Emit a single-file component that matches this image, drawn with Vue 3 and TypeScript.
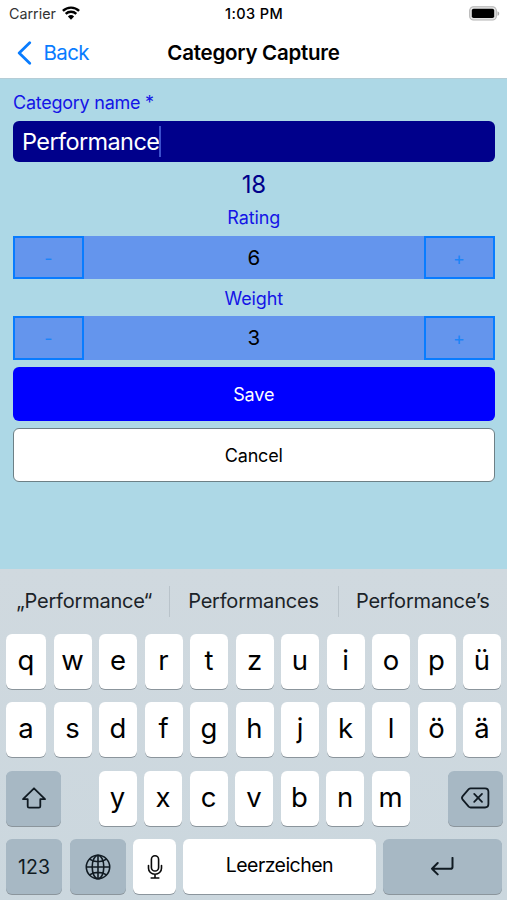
<script setup lang="ts">
import { computed, ref } from 'vue'

const name = ref('Performance')
const rating = ref(6)
const weight = ref(3)
const score = computed(() => rating.value * weight.value)

const suggestions = ['„Performance“', 'Performances', 'Performance’s']
const letterRows = [Array.from('qwertzuiopü'), Array.from('asdfghjklöä')]
const bottomLetters = Array.from('yxcvbnm')

function step(target: 'rating' | 'weight', delta: number) {
  const field = target === 'rating' ? rating : weight
  field.value = Math.max(0, field.value + delta)
}
</script>

<template>
  <main class="phone">
    <div class="status">
      <span class="carrier">Carrier</span>
      <svg class="wifi" viewBox="0 0 18 14" width="18" height="14">
        <path d="M.9 4.900a11.600 11.600 0 0 1 16.200 0M3.700 7.900a7.600 7.600 0 0 1 10.600 0" fill="none" stroke="#000" stroke-width="2.400" />
        <path d="M9 13.700 5.900 10.400a4.500 4.500 0 0 1 6.200 0z" fill="#000" />
      </svg>
      <span class="time">1:03 PM</span>
      <svg class="battery" viewBox="0 0 31 15" width="31" height="15">
        <rect x=".7" y=".8" width="26.6" height="13.2" rx="3.8" fill="#e4e4e4" stroke="#b4b4b4" stroke-width="1.1" />
        <rect x="2.8" y="2.8" width="22.4" height="9.2" rx="1.8" fill="#000" />
        <path d="M28.5 5.2c2.3.8 2.3 3.8 0 4.6z" fill="#aaa" />
      </svg>
    </div>

    <header class="nav">
      <button class="back">
        <svg viewBox="0 0 15 24" width="15" height="24">
          <path d="M12.7 1.800 2.200 12l10.500 10.200" fill="none" stroke="#087cff" stroke-width="2.8" stroke-linecap="round" stroke-linejoin="round" />
        </svg>
        <span>Back</span>
      </button>
      <h1>Category Capture</h1>
    </header>

    <section class="form">
      <div class="label name-label"><span>Category name *</span></div>
      <div class="input"><span class="value">{{ name }}</span><i class="caret"></i></div>
      <div class="score">{{ score }}</div>
      <div class="label rating-label"><span>Rating</span></div>
      <div class="stepper">
        <button @click="step('rating', -1)">-</button>
        <output>{{ rating }}</output>
        <button @click="step('rating', 1)">+</button>
      </div>
      <div class="label weight-label"><span>Weight</span></div>
      <div class="stepper">
        <button @click="step('weight', -1)">-</button>
        <output>{{ weight }}</output>
        <button @click="step('weight', 1)">+</button>
      </div>
      <button class="action save">Save</button>
      <button class="action cancel">Cancel</button>
    </section>

    <section class="keyboard">
      <div class="suggestions">
        <div v-for="s in suggestions" :key="s" class="suggestion"><span>{{ s }}</span></div>
      </div>
      <div v-for="(row, r) in letterRows" :key="r" class="row letters">
        <button v-for="k in row" :key="k" class="key">{{ k }}</button>
      </div>
      <div class="row third">
        <button class="key dark">
          <svg viewBox="0 0 26 24" width="26" height="24">
            <path d="M13 2.3 2 13.2h4.7v7.1c0 .9.5 1.4 1.4 1.4h9.8c.9 0 1.4-.5 1.4-1.4v-7.1H24z" fill="none" stroke="#101a22" stroke-width="1.8" stroke-linejoin="round" />
          </svg>
        </button>
        <div class="middle">
          <button v-for="k in bottomLetters" :key="k" class="key">{{ k }}</button>
        </div>
        <button class="key dark">
          <svg viewBox="0 0 30 24" width="30" height="24">
            <path d="M10.700 2.300h14.300c2.300 0 3.400 1.100 3.400 3.400v12.400c0 2.300-1.100 3.400-3.400 3.400H10.700c-.8 0-1.400-.3-2-.9L2.700 13.600c-1-1.100-1-2.200 0-3.400L8.700 3.200c.6-.6 1.200-.9 2-.9z" fill="none" stroke="#101a22" stroke-width="1.800" />
            <path d="m14.200 7.900 7.800 8m0-8-7.800 8" fill="none" stroke="#101a22" stroke-width="1.800" stroke-linecap="round" />
          </svg>
        </button>
      </div>
      <div class="row fourth">
        <button class="key dark num">123</button>
        <button class="key dark">
          <svg viewBox="0 0 26 26" width="26" height="26">
            <g fill="none" stroke="#101a22" stroke-width="1.600">
              <circle cx="13" cy="13" r="11.700" />
              <ellipse cx="13" cy="13" rx="5.800" ry="11.700" />
              <path d="M13 1.200v23.600M1.200 13h23.600M4.500 5.200c4.800 3.300 12.200 3.300 17 0M4.500 20.800c4.800-3.300 12.200-3.300 17 0" />
            </g>
          </svg>
        </button>
        <button class="key mic">
          <svg viewBox="0 0 16 26" width="16" height="26">
            <g fill="none" stroke="#0a0a0a" stroke-width="1.600" stroke-linecap="round">
              <rect x="4.400" y="1.800" width="7.200" height="15.200" rx="3.600" />
              <path d="M1.500 11.600v2.600c0 3.500 2.800 6 6.500 6s6.500-2.500 6.500-6v-2.600M8 20.400v3.600M4.200 24h7.600" />
            </g>
          </svg>
        </button>
        <button class="key space"><span>Leerzeichen</span></button>
        <button class="key dark">
          <svg viewBox="0 0 24 20" width="24" height="20">
            <path d="M22.500 .900v9c0 1.200-.6 1.800-1.800 1.800H2M7.700 6 2 11.700l5.700 5.700" fill="none" stroke="#101a22" stroke-width="2" stroke-linecap="round" stroke-linejoin="round" />
          </svg>
        </button>
      </div>
    </section>
  </main>
</template>

<style>
body { margin: 0; background: #fff; }
</style>

<style scoped>
.phone {
  display: flex;
  flex-direction: column;
  width: 507px;
  height: 900px;
  overflow: hidden;
  background: #add8e6;
  font-family: Inter, "Liberation Sans", sans-serif;
  color: #000;
}
button {
  display: flex;
  align-items: center;
  justify-content: center;
  box-sizing: border-box;
  padding: 0;
  margin: 0;
  border: 0;
  background: none;
  font: inherit;
  color: inherit;
}
svg { display: block; flex: none; }
.status {
  display: grid;
  grid-template-columns: 53px 163px 244px 31px;
  align-items: center;
  flex: none;
  height: 27px;
  padding: 0 5px 0 9px;
  background: #fff;
  font-size: 14.300px;
  white-space: nowrap;
}
.wifi { margin-top: -2px; }
.carrier { color: #333; }
.time { font-weight: 500; font-size: 14.500px; letter-spacing: .4px; }
.nav {
  display: grid;
  grid-template-columns: 1fr auto 1fr;
  align-items: center;
  flex: none;
  height: 51px;
  padding: 0 16.500px;
  border-bottom: 1px solid #b5cdd6;
  background: #fff;
}
.back { justify-content: flex-start; gap: 12px; font-size: 20.500px; letter-spacing: -.6px; color: #087cff; }
h1 { margin: 0; font-size: 20.500px; font-weight: 600; letter-spacing: -.25px; white-space: nowrap; }
.form {
  display: flex;
  flex-direction: column;
  flex: none;
  box-sizing: border-box;
  height: 490px;
  padding: 0 12.500px 0 13px;
}
.label { display: flex; align-items: center; justify-content: center; font-size: 18px; letter-spacing: -.1px; color: #1414e6; }
.name-label { justify-content: flex-start; height: 41.500px; padding-top: 5px; box-sizing: border-box; letter-spacing: -.25px; }
.input {
  display: flex;
  align-items: center;
  height: 41.500px;
  padding-left: 9px;
  border-radius: 6px;
  background: #00008b;
  color: #fff;
  font-size: 23.500px;
  letter-spacing: -.6px;
}
.caret { width: 2px; height: 31px; background: #3c50cc; }
.score { display: flex; align-items: center; justify-content: center; height: 44px; font-size: 24px; letter-spacing: -.2px; color: #00008b; }
.rating-label { height: 22px; margin-bottom: 7.500px; }
.stepper {
  display: grid;
  grid-template-columns: 71px 1fr 71px;
  height: 43.500px;
  background: #6495ed;
}
.stepper button { border: 2px solid #087cff; padding-top: 2px; color: #1c84f8; font-size: 18px; }
.stepper output { display: flex; align-items: center; justify-content: center; font-size: 20.500px; }
.weight-label { height: 37px; padding-top: 1px; box-sizing: border-box; }
.action { flex: none; height: 54px; margin-top: 7.500px; border-radius: 6px; font-size: 18px; letter-spacing: -.15px; }
.save { background: #00f; color: #fff; }
.cancel { margin-top: 7px; border: 1px solid #6d8086; background: #fff; }
.keyboard {
  flex: 1;
  background: linear-gradient(#d0d9df, #cbd7de);
}
.suggestions {
  display: grid;
  grid-template-columns: 168.500px 169px 1fr;
  align-items: center;
  height: 64.500px;
  font-size: 20px;
  letter-spacing: -.2px;
  color: #1b2328;
}
.suggestion { display: flex; align-items: center; justify-content: center; height: 31px; white-space: nowrap; }
.suggestion + .suggestion { border-left: 1px solid #b9c3ca; }
.row { display: grid; height: 55px; margin: 0 5px 13.500px 6px; }
.letters { grid-template-columns: 40px repeat(10, 38px); gap: 7.500px; }
.third { grid-template-columns: 55px 311.500px 55px; column-gap: 37.500px; }
.middle { display: grid; grid-template-columns: repeat(7, 38px); gap: 7.500px; }
.fourth { grid-template-columns: 56px 56px 43px 193px 118.500px; column-gap: 7.300px; }
.key {
  height: 55px;
  border-radius: 6px;
  background: #fff;
  box-shadow: 0 1px 0 #8b959c;
  font-size: 27.500px;
  font-weight: 400;
  padding-bottom: 3px;
  color: #000;
}
.dark { padding: 0; background: #a7b8c4; color: #101a22; }
.fourth .key:nth-child(2) { margin-left: .7px; margin-right: -.7px; }
.mic { padding: 0 0 0 1px; }
.num { font-size: 19.500px; }
.space { font-size: 19.500px; letter-spacing: -.55px; }
</style>
